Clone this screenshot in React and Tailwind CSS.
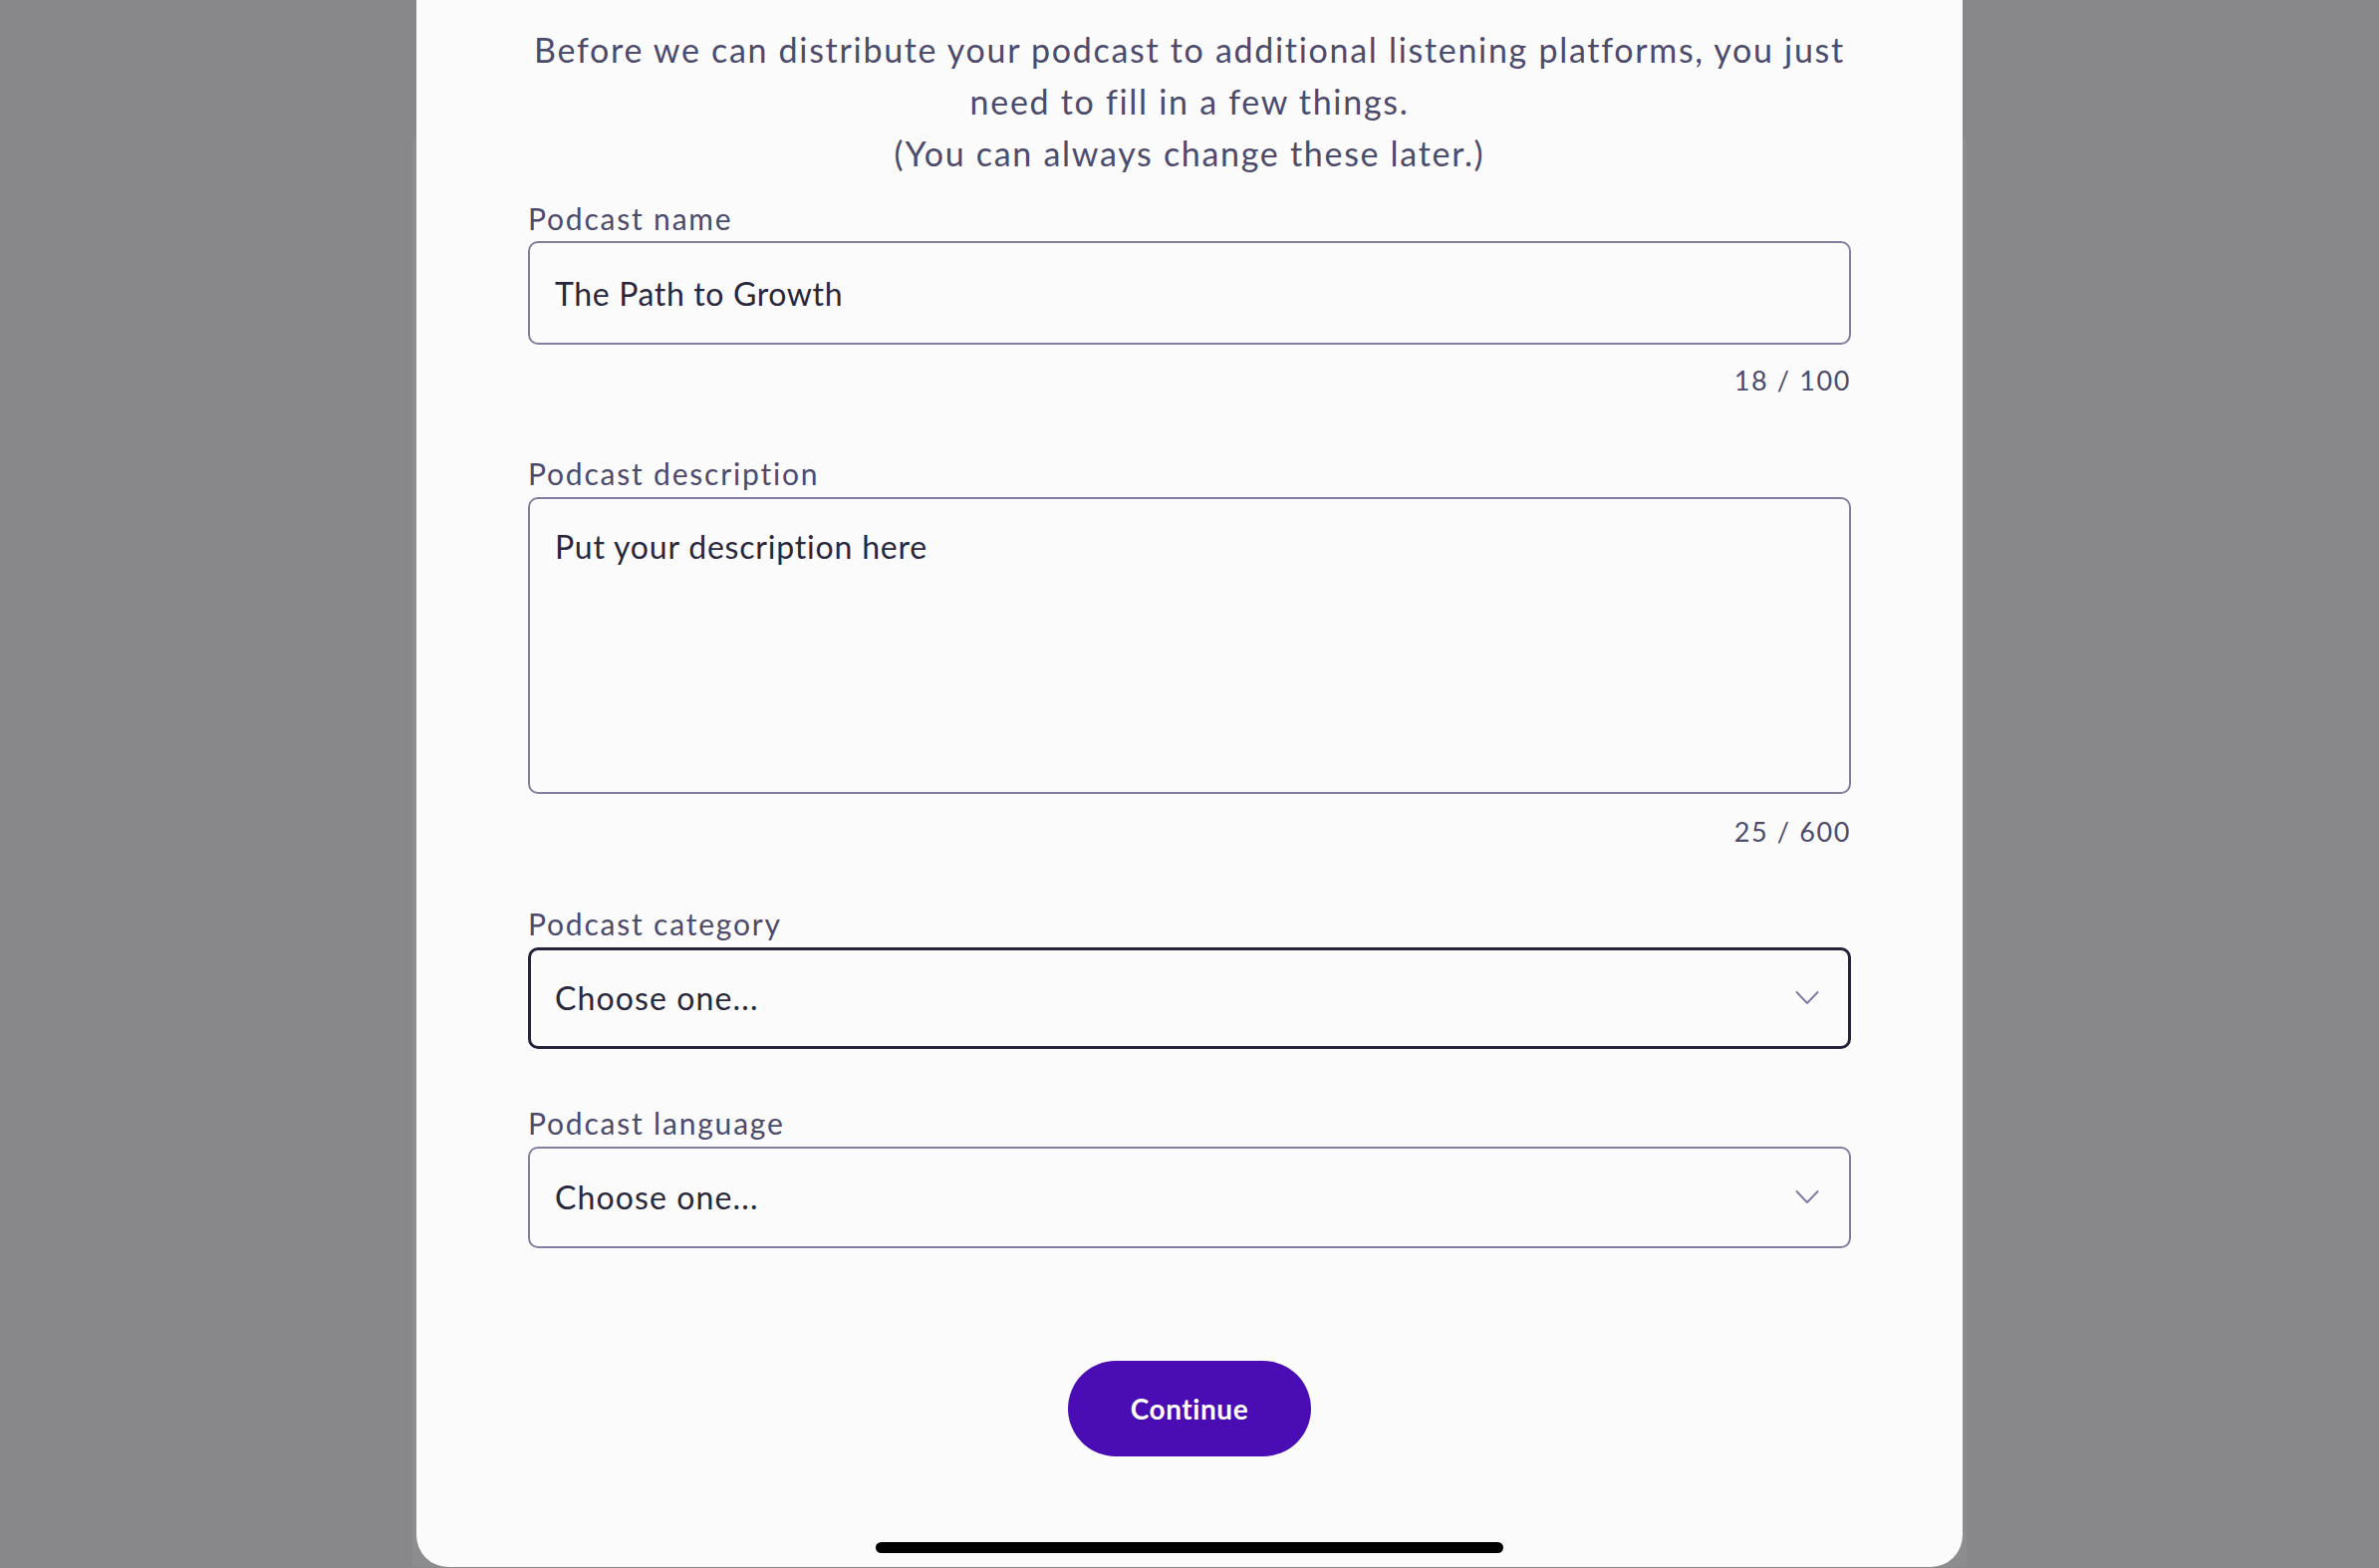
import React, { useState } from 'react';

const Chevron = () => (
  <svg width="24" height="15" viewBox="0 0 24 15" fill="none" className="pointer-events-none">
    <path d="M1.5 1.5 L12 12.5 L22.5 1.5" stroke="#7f7c9f" strokeWidth="2" strokeLinecap="round" strokeLinejoin="round" />
  </svg>
);

function Field({ label, children, labelGap = 'mt-[3px]' }) {
  return (
    <div className="flex flex-col">
      <label className="text-[30px] leading-[40px] tracking-[0.06em] text-[#4d4b6c]">{label}</label>
      <div className={labelGap}>{children}</div>
    </div>
  );
}

function SelectField({ label, focused }) {
  const [value, setValue] = useState('');
  return (
    <Field label={label} labelGap="mt-[4px]">
      <div className="relative">
        <select
          value={value}
          onChange={(e) => setValue(e.target.value)}
          className={
            focused
              ? 'w-full h-[102px] appearance-none rounded-[10px] border-[3px] border-[#25243a] bg-[#fbfbfb] pl-[24px] pr-20 text-[32px] tracking-[0.035em] text-[#28273c] outline-none'
              : 'w-full h-[102px] appearance-none rounded-[10px] border-2 border-[#817ea0] bg-[#fbfbfb] pl-[25px] pr-20 text-[32px] tracking-[0.035em] text-[#28273c] outline-none'
          }
        >
          <option value="">Choose one...</option>
        </select>
        <span className="absolute right-[32px] top-1/2 -translate-y-1/2 flex">
          <Chevron />
        </span>
      </div>
    </Field>
  );
}

export default function App() {
  const [name, setName] = useState('The Path to Growth');
  const [desc, setDesc] = useState('Put your description here');

  return (
    <div className="w-full h-[1574px] overflow-hidden bg-[#88888a] font-['Lato','Noto_Sans',sans-serif] flex justify-center">
      <div className="relative w-[1552px] h-[1573px]">
        <div className="absolute -left-[4px] -right-[4px] top-[133px] bottom-0 rounded-t-[12px] bg-[#8d8d8f]" />
        <div className="relative h-full rounded-b-[32px] bg-[#fbfbfb] px-[112px] pt-[24px] flex flex-col">
          <p className="text-center text-[34px] leading-[52px] tracking-[0.05em] text-[#4d4b6c]">
            Before we can distribute your podcast to additional listening platforms, you just
            <br />
            need to fill in a few things.
            <br />
            (You can always change these later.)
          </p>

          <div className="mt-[19px]">
            <Field label="Podcast name">
              <input
                value={name}
                onChange={(e) => setName(e.target.value)}
                maxLength={100}
                className="w-full h-[104px] rounded-[10px] border-2 border-[#817ea0] bg-[#fbfbfb] px-[25px] text-[32px] tracking-[0.02em] text-[#28273c] outline-none"
              />
            </Field>
            <div className="mt-[16px] text-right text-[27px] leading-[40px] tracking-[0.06em] text-[#4d4b6c]">
              {name.length} / 100
            </div>
          </div>

          <div className="mt-[53px]">
            <Field label="Podcast description" labelGap="mt-[4px]">
              <textarea
                value={desc}
                onChange={(e) => setDesc(e.target.value)}
                maxLength={600}
                className="block w-full h-[298px] resize-none rounded-[10px] border-2 border-[#817ea0] bg-[#fbfbfb] px-[25px] pt-[28px] text-[32px] leading-[40px] tracking-[0.025em] text-[#28273c] outline-none"
              />
            </Field>
            <div className="mt-[18px] text-right text-[27px] leading-[40px] tracking-[0.06em] text-[#4d4b6c]">
              {desc.length} / 600
            </div>
          </div>

          <div className="mt-[52px]">
            <SelectField label="Podcast category" focused />
          </div>

          <div className="mt-[54px]">
            <SelectField label="Podcast language" />
          </div>

          <div className="mt-[113px] flex justify-center">
            <button className="w-[244px] h-[96px] rounded-full bg-[#4a0cb3] text-[28px] font-bold tracking-[0.02em] text-white">
              Continue
            </button>
          </div>

          <div className="mt-auto mb-[14px] flex justify-center">
            <div className="w-[630px] h-[11px] rounded-full bg-black" />
          </div>
        </div>
      </div>
    </div>
  );
}
